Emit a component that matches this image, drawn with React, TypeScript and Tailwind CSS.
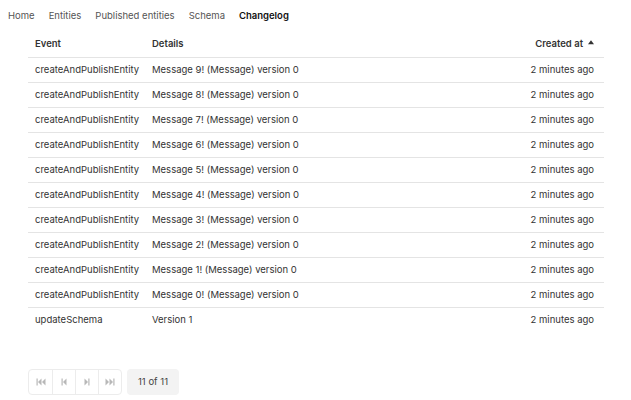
import React from 'react';

const rows: { event: string; details: string; created: string }[] = [
  ...Array.from({ length: 10 }, (_, i) => ({
    event: 'createAndPublishEntity',
    details: `Message ${9 - i}! (Message) version 0`,
    created: '2 minutes ago',
  })),
  { event: 'updateSchema', details: 'Version 1', created: '2 minutes ago' },
];

const navItems = ['Home', 'Entities', 'Published entities', 'Schema', 'Changelog'];

function PageIcon({ kind }: { kind: 'first' | 'prev' | 'next' | 'last' }) {
  return (
    <svg width="10" height="8" viewBox="0 0 10 8" fill="currentColor">
      {kind === 'first' && (
        <>
          <rect x="0.5" y="0.5" width="1.2" height="7" />
          <path d="M5.5 0.5 L2 4 L5.5 7.5 Z" />
          <path d="M9.5 0.5 L6 4 L9.5 7.5 Z" />
        </>
      )}
      {kind === 'prev' && (
        <>
          <rect x="2.5" y="0.5" width="1.2" height="7" />
          <path d="M7.5 0.5 L4 4 L7.5 7.5 Z" />
        </>
      )}
      {kind === 'next' && (
        <>
          <path d="M2.5 0.5 L6 4 L2.5 7.5 Z" />
          <rect x="6.3" y="0.5" width="1.2" height="7" />
        </>
      )}
      {kind === 'last' && (
        <>
          <path d="M0.5 0.5 L4 4 L0.5 7.5 Z" />
          <path d="M4.5 0.5 L8 4 L4.5 7.5 Z" />
          <rect x="8.3" y="0.5" width="1.2" height="7" />
        </>
      )}
    </svg>
  );
}

export default function App() {
  return (
    <div className="min-h-[400px] w-[631px] bg-white text-[9.5px] text-[#333]" style={{ fontFamily: 'Inter, "Liberation Sans", sans-serif' }}>
      <nav className="flex h-8 items-center gap-[14px] pl-2 pt-px">
        {navItems.map((n) => (
          <span key={n} className={n === 'Changelog' ? 'font-semibold text-[#111]' : 'text-[#555]'}>
            {n}
          </span>
        ))}
      </nav>

      <table className="ml-[28px] w-[576px] table-fixed border-collapse">
        <thead>
          <tr className="h-[25px] border-b border-[#e4e4e4] text-left">
            <th className="w-[124px] pl-[7px] font-semibold">Event</th>
            <th className="font-semibold">Details</th>
            <th className="w-[150px] pr-[10px] text-right font-semibold">
              <span className="inline-flex items-center gap-[5px]">
                Created at
                <svg width="6" height="5" viewBox="0 0 7 5" className="-mt-[3px]" fill="currentColor">
                  <path d="M3.5 0 L7 4.5 L0 4.5 Z" />
                </svg>
              </span>
            </th>
          </tr>
        </thead>
        <tbody>
          {rows.map((r, i) => (
            <tr key={i} className={`h-[25px] ${i < rows.length - 1 ? 'border-b border-[#e4e4e4]' : ''}`}>
              <td className="pl-[7px] pt-px">{r.event}</td>
              <td className="pt-px">{r.details}</td>
              <td className="pr-[10px] pt-px text-right">{r.created}</td>
            </tr>
          ))}
        </tbody>
      </table>

      <div className="ml-[28px] mt-[37px] flex items-center gap-[5px]">
        <div className="flex h-[26px] rounded border border-[#ececec]">
          {(['first', 'prev', 'next', 'last'] as const).map((k, i) => (
            <button
              key={k}
              className={`flex w-[23px] items-center justify-center text-[#b8b8b8] ${i > 0 ? 'border-l border-[#ececec]' : ''}`}
            >
              <PageIcon kind={k} />
            </button>
          ))}
        </div>
        <div className="flex h-[26px] w-[52px] items-center justify-center rounded bg-[#f3f3f3] text-[#444]">11 of 11</div>
      </div>
    </div>
  );
}
